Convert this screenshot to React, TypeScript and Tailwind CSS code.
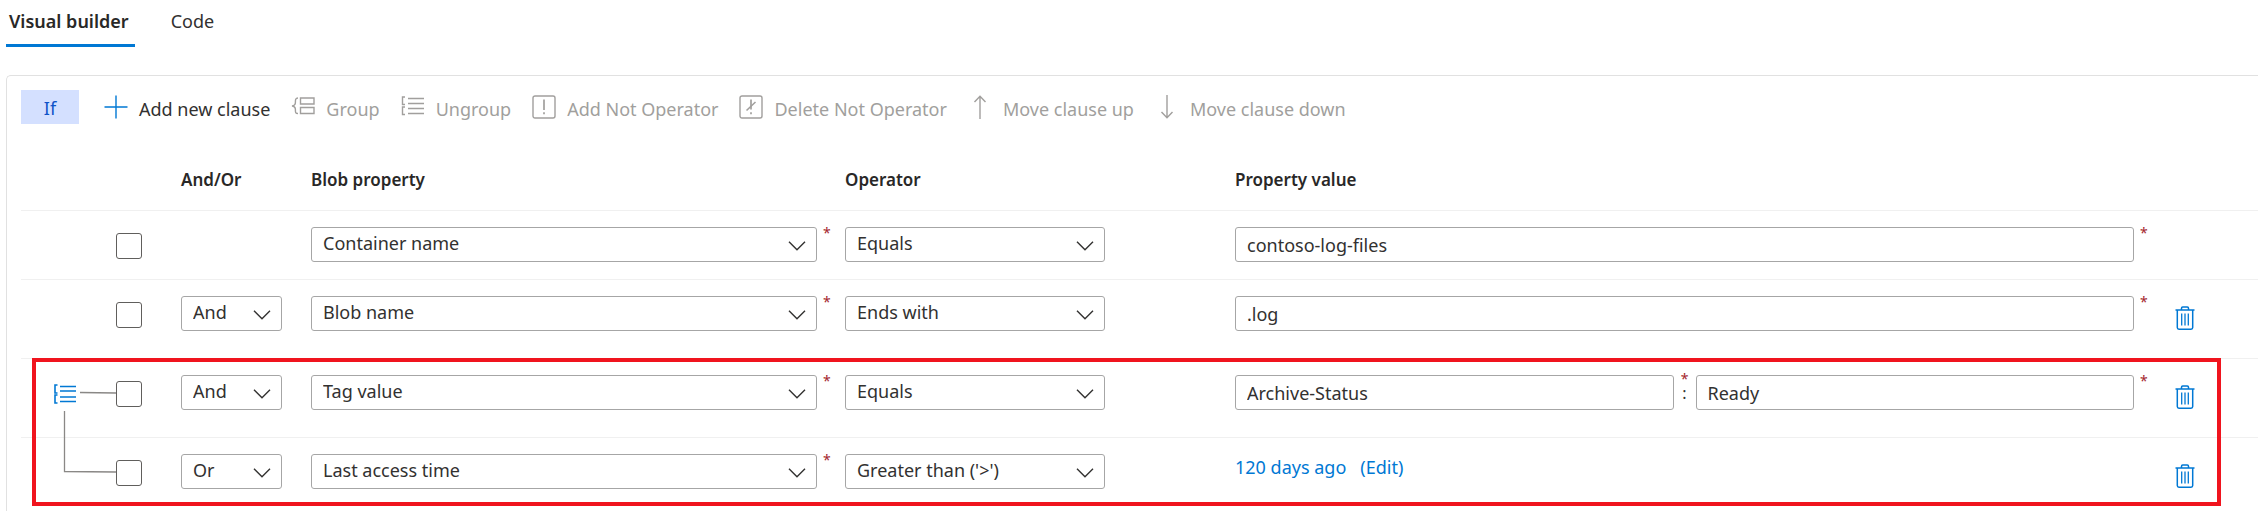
import type { ReactNode } from 'react';

type Clause = {
  id: string;
  join?: string;
  property: string;
  operator: string;
  values?: string[];
  link?: string;
  removable: boolean;
};

const clauses: Clause[] = [
  { id: 'c1', property: 'Container name', operator: 'Equals', values: ['contoso-log-files'], removable: false },
  { id: 'c2', join: 'And', property: 'Blob name', operator: 'Ends with', values: ['.log'], removable: true },
];

const groupedClauses: Clause[] = [
  { id: 'c3', join: 'And', property: 'Tag value', operator: 'Equals', values: ['Archive-Status', 'Ready'], removable: true },
  { id: 'c4', join: 'Or', property: 'Last access time', operator: "Greater than ('>')", link: '120 days ago', removable: true },
];

const iconProps = {
  width: 24,
  height: 24,
  viewBox: '0 0 24 24',
  fill: 'none',
  stroke: 'currentColor',
  strokeWidth: 1.4,
  'aria-hidden': true,
} as const;

function PlusIcon() {
  return (
    <svg {...iconProps} className="shrink-0 text-[#0078d4]">
      <path d="M12 0.5V23.5M0.5 12H23.5" />
    </svg>
  );
}

function GroupIcon() {
  return (
    <svg {...iconProps} className="shrink-0">
      <path d="M7 3C4.200 3 4.400 5 4.400 7.500C4.400 9.500 3.200 10.700 1 11C3.200 11.300 4.400 12.500 4.400 14.500C4.400 17 4.200 18.500 7 18.500" />
      <path d="M9.500 3H23V9H9.500ZM9.500 12.500H23V18.500H9.500Z" />
    </svg>
  );
}

function UngroupIcon() {
  return (
    <svg {...iconProps} className="shrink-0">
      <path d="M4 2H1.500V9.500H4M4 12H1.500V19.500H4" />
      <path d="M7 3.500H23M7 8.500H23M7 13.500H23M7 18.500H23" />
    </svg>
  );
}

function NotIcon({ struck = false }: { struck?: boolean }) {
  return (
    <svg {...iconProps} className="shrink-0">
      <rect x="1" y="1" width="22" height="22" rx="2" />
      <path d={struck ? 'M12 4.500V14.500M12 17.300V19.300' : 'M12 4.500V15M12 17.300V19.300'} strokeWidth="1.700" />
      {struck && <path d="M16.500 7L7.500 15.500" strokeWidth="1.600" />}
    </svg>
  );
}

function ArrowIcon({ down = false }: { down?: boolean }) {
  return (
    <svg {...iconProps} className="shrink-0">
      <path d={down ? 'M12 0V23M6.500 17L12 22.800L17.500 17' : 'M12 24V1M6.500 7L12 1.200L17.500 7'} />
    </svg>
  );
}

function TrashIcon() {
  return (
    <svg width="20" height="24" viewBox="0 0 20 24" fill="none" stroke="currentColor" strokeWidth="1.500" aria-hidden="true">
      <path d="M0.500 4H19.500M6.500 4V2.200Q6.500 1 7.700 1H12.300Q13.500 1 13.500 2.200V4" />
      <path d="M2.300 4V21.500Q2.300 23.200 4 23.200H16Q17.700 23.200 17.700 21.500V4" />
      <path d="M6.700 7.500V19.500M10 7.500V19.500M13.300 7.500V19.500" strokeWidth="1.300" />
    </svg>
  );
}

function ToolbarButton({ icon, label, disabled = false }: { icon: ReactNode; label: string; disabled?: boolean }) {
  return (
    <button type="button" disabled={disabled} className="flex items-center gap-[11px] whitespace-nowrap text-[#323130] disabled:text-[#a19f9d]">
      {icon}
      <span className="pt-[3px]">{label}</span>
    </button>
  );
}

function Dropdown({ value, label }: { value: string; label: string }) {
  return (
    <div className="relative min-w-0 flex-1">
      <select
        aria-label={label}
        defaultValue={value}
        className="block h-[35px] w-full appearance-none rounded-[3px] border border-[#a6a6a6] bg-white pr-9 pb-0.5 pl-[11px] text-[#323130]"
      >
        <option>{value}</option>
      </select>
      <svg
        width="18"
        height="10"
        viewBox="0 0 18 10"
        fill="none"
        stroke="#323130"
        strokeWidth="1.400"
        className="pointer-events-none absolute top-3.5 right-[11px]"
        aria-hidden="true"
      >
        <path d="M1 0.800L9 8.800L17 0.800" />
      </svg>
    </div>
  );
}

function TextField({ value, label }: { value: string; label: string }) {
  return (
    <input
      type="text"
      aria-label={label}
      defaultValue={value}
      className="block h-[35px] w-full min-w-0 flex-1 rounded-[3px] border border-[#a6a6a6] bg-white px-[11px] pt-0.5 text-[#323130]"
    />
  );
}

function Required() {
  return <span className="w-2.5 shrink-0 text-sm leading-3 text-[#a4262c]">*</span>;
}

function GroupOverlay() {
  return (
    <>
      <div className="pointer-events-none absolute top-0 right-[37px] bottom-[5px] left-[11px] border-4 border-[#f0141e]" />
      <svg width="62" height="90" viewBox="0 0 62 90" fill="none" className="absolute top-[26px] left-[33px]" aria-hidden="true">
        <path d="M3.500 1H1V9H3.500M3.500 11H1V19H3.500" stroke="#0078d4" strokeWidth="1.600" />
        <path d="M6 2.500H22M6 7H22M6 13H22M6 17.500H22" stroke="#0078d4" strokeWidth="1.600" />
        <path d="M26 8.500L62 9M10.500 27V87.500L62 88" stroke="#8a8886" strokeWidth="1.300" />
      </svg>
    </>
  );
}

function ClauseRow({ clause, height, lead }: { clause: Clause; height: string; lead?: ReactNode }) {
  return (
    <tr className={`border-t border-[#f0f0f0] align-top ${height}`}>
      <td className="pt-[22px] pl-[95px]">
        {lead}
        <input
          type="checkbox"
          aria-label={`Select ${clause.property} clause`}
          className="block size-[26px] appearance-none rounded-[3px] border border-[#605e5c] bg-white"
        />
      </td>
      <td className="pt-4 pr-[29px]">{clause.join && <Dropdown label="And/Or" value={clause.join} />}</td>
      <td className="pt-4 pr-3">
        <div className="flex items-start gap-1.5">
          <Dropdown label="Blob property" value={clause.property} />
          <Required />
        </div>
      </td>
      <td className="pt-4 pr-[130px]">
        <Dropdown label="Operator" value={clause.operator} />
      </td>
      <td className="pt-4 pr-[15px]">
        {clause.link ? (
          <div className="flex gap-3.5 leading-[26px]">
            <a href="#days" className="text-[#0078d4]">{clause.link}</a>
            <a href="#edit" className="text-[#0078d4]">(Edit)</a>
          </div>
        ) : (
          <div className="flex items-start gap-1.5">
            <TextField label="Property value" value={clause.values![0]} />
            {clause.values![1] && (
              <>
                <div className="flex w-2.5 flex-col items-center">
                  <span className="text-sm leading-2 text-[#a4262c]">*</span>
                  <span className="text-base leading-5 text-[#323130]">:</span>
                </div>
                <TextField label="Tag match" value={clause.values![1]} />
              </>
            )}
            <Required />
          </div>
        )}
      </td>
      <td className="pt-[26px] pl-[10px]">
        {clause.removable && (
          <button type="button" aria-label={`Delete ${clause.property} clause`} className="block text-[#0078d4]">
            <TrashIcon />
          </button>
        )}
      </td>
    </tr>
  );
}

export default function App() {
  return (
    <div className="overflow-x-hidden bg-white pl-1.5 font-['Noto_Sans','Open_Sans',sans-serif] text-[18px] leading-6 text-[#323130]">
      <nav className="flex gap-8" role="tablist">
        <button type="button" role="tab" aria-selected="true" className="h-[47px] border-b-[3px] border-[#0078d4] pr-1.5 pb-[3px] pl-[3px] font-semibold text-[#292827]">
          Visual builder
        </button>
        <button type="button" role="tab" aria-selected="false" className="h-[47px] px-1 pb-[5px]">
          Code
        </button>
      </nav>

      <main className="mt-7 rounded-tl-[5px] border-t border-l border-[#e1e1e1] pl-3.5">
        <div className="flex items-center gap-[21px] pt-3.5">
          <span className="mr-1 flex h-[34px] w-[58px] items-center justify-center bg-[#d4e0ff] pt-0.5 text-[#0f54c8]">If</span>
          <ToolbarButton icon={<PlusIcon />} label="Add new clause" />
          <ToolbarButton disabled icon={<GroupIcon />} label="Group" />
          <ToolbarButton disabled icon={<UngroupIcon />} label="Ungroup" />
          <ToolbarButton disabled icon={<NotIcon />} label="Add Not Operator" />
          <ToolbarButton disabled icon={<NotIcon struck />} label="Delete Not Operator" />
          <ToolbarButton disabled icon={<ArrowIcon />} label="Move clause up" />
          <ToolbarButton disabled icon={<ArrowIcon down />} label="Move clause down" />
        </div>

        <table className="mt-[26px] w-full min-w-[1600px] table-fixed border-collapse text-left">
          <colgroup>
            <col className="w-[160px]" />
            <col className="w-[130px]" />
            <col className="w-[534px]" />
            <col className="w-[390px]" />
            <col />
            <col className="w-[93px]" />
          </colgroup>
          <thead>
            <tr className="h-[60px] text-[17px] text-[#292827]">
              <td />
              <th scope="col" className="font-semibold">And/Or</th>
              <th scope="col" className="font-semibold">Blob property</th>
              <th scope="col" className="font-semibold">Operator</th>
              <th scope="col" className="font-semibold">Property value</th>
              <td />
            </tr>
          </thead>
          <tbody>
            <ClauseRow clause={clauses[0]} height="h-[69px]" />
            <ClauseRow clause={clauses[1]} height="h-[79px]" />
          </tbody>
          <tbody className="relative">
            <ClauseRow clause={groupedClauses[0]} height="h-[79px]" lead={<GroupOverlay />} />
            <ClauseRow clause={groupedClauses[1]} height="h-[74px]" />
          </tbody>
        </table>
      </main>
    </div>
  );
}
